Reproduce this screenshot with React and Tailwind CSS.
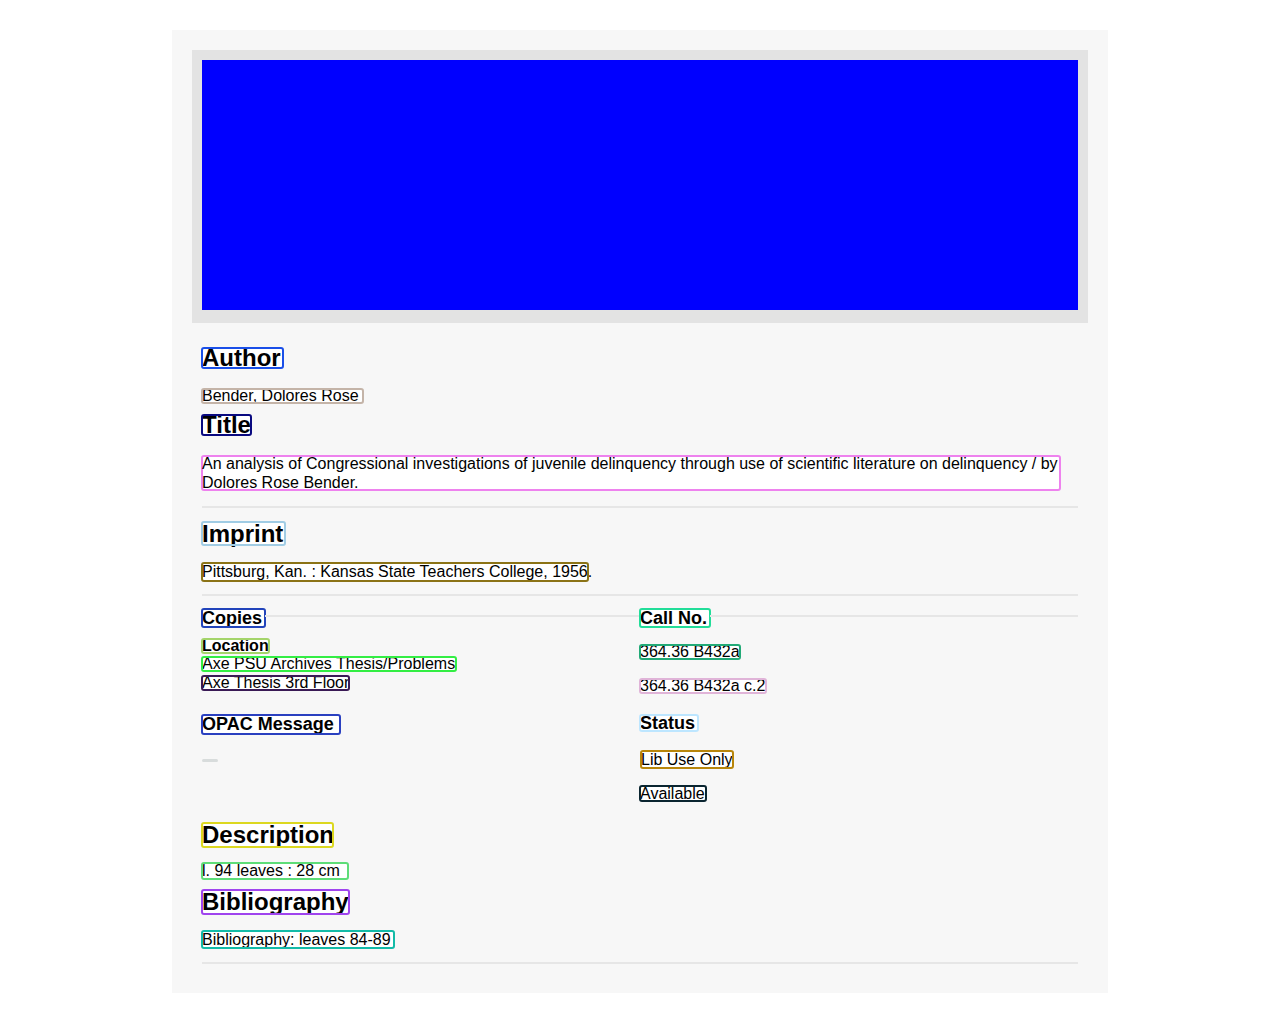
import React from 'react'

// outlined text box, outline sits over the text like in the reference
function Box({ className, children }) {
  return (
    <span className={'block bg-white text-black whitespace-nowrap outline-2 outline-solid -outline-offset-1 rounded-[2px] ' + className}>
      {children}
    </span>
  )
}

function Rule({ className }) {
  return <div className={'h-[2px] bg-[#e6e6e6] ' + className} />
}

export default function App() {
  return (
    <div className="min-h-screen bg-white pt-[30px] font-['Liberation_Sans',Arial,sans-serif] text-[16px] text-black">
      <div className="mx-auto w-[936px] bg-[#f7f7f7] p-[20px] pb-[29px]">

        {/* banner */}
        <div className="bg-[#e3e3e3] p-[10px] pb-[13px]">
          <div className="h-[250px] bg-[#0000ff]" />
        </div>

        <div className="px-[10px]">
          <Box className="mt-[25px] w-[81px] h-[20px] leading-[20px] text-[24px] font-bold outline-[#1a4fe8]">Author</Box>
          <Box className="mt-[21px] w-[161px] h-[14px] leading-[14px] outline-[#c4b4a8]">Bender, Dolores Rose</Box>
          <Box className="mt-[12px] w-[49px] h-[20px] leading-[20px] text-[24px] font-bold outline-[#0a0a80]">Title</Box>
          <Box className="mt-[21px] w-[858px] h-[34px] leading-[19px] !whitespace-normal outline-[#ee82ee]">
            <span className="relative top-[-2px]">
              An analysis of Congressional investigations of juvenile delinquency through use of scientific literature on delinquency / by Dolores Rose Bender.
            </span>
          </Box>

          <Rule className="mt-[16px]" />

          <Box className="mt-[14px] w-[83px] h-[23px] leading-[23px] text-[24px] font-bold outline-[#a0cce4]">Imprint</Box>
          <Box className="mt-[18px] w-[386px] h-[18px] leading-[18px] outline-[#8b7316]">Pittsburg, Kan. : Kansas State Teachers College, 1956.</Box>

          <Rule className="mt-[13px]" />

          {/* copies / call no. */}
          <div className="mt-[13px] grid grid-cols-2">
            <div>
              <div className="flex items-start">
                <Box className="w-[63px] h-[18px] leading-[18px] text-[18px] font-bold outline-[#2244bb]">Copies</Box>
                <div className="mt-[6px] h-[2px] flex-1 bg-[#e6e6e6]" />
              </div>
              <Box className="mt-[12px] w-[67px] h-[14px] leading-[14px] font-bold outline-[#a4d46a]">Location</Box>
              <Box className="mt-[4px] w-[254px] h-[14px] leading-[14px] outline-[#33ee44]">Axe PSU Archives Thesis/Problems</Box>
              <Box className="mt-[5px] w-[147px] h-[14px] leading-[14px] outline-[#3a1a55]">Axe Thesis 3rd Floor</Box>
              <Box className="mt-[25px] w-[138px] h-[19px] leading-[19px] text-[18px] font-bold outline-[#2a40c0]">OPAC Message</Box>
              <div className="mt-[25px] w-[16px] h-[3px] rounded-full bg-[#d8dcdc]" />
            </div>
            <div>
              <div className="flex items-start">
                <Box className="w-[70px] h-[18px] leading-[18px] text-[18px] font-bold outline-[#22dd99]">Call No.</Box>
                <div className="mt-[6px] h-[2px] flex-1 bg-[#e6e6e6]" />
              </div>
              <Box className="mt-[18px] w-[100px] h-[14px] leading-[14px] outline-[#22aa77]">364.36 B432a</Box>
              <Box className="mt-[20px] w-[126px] h-[14px] leading-[14px] outline-[#e0b4d8]">364.36 B432a c.2</Box>
              <Box className="mt-[22px] w-[58px] h-[16px] leading-[16px] text-[18px] font-bold outline-[#bde6ff]">Status</Box>
              <Box className="mt-[20px] ml-[1px] w-[92px] h-[17px] leading-[17px] outline-[#b8860b]">Lib Use Only</Box>
              <Box className="mt-[18px] w-[66px] h-[15px] leading-[15px] outline-[#0a2530]">Available</Box>
            </div>
          </div>

          <Box className="mt-[22px] w-[131px] h-[24px] leading-[24px] text-[24px] font-bold outline-[#dcd820]">Description</Box>
          <Box className="mt-[16px] w-[146px] h-[16px] leading-[16px] outline-[#5edd78]">l. 94 leaves : 28 cm</Box>
          <Box className="mt-[11px] w-[147px] h-[24px] leading-[24px] text-[24px] font-bold outline-[#a044ee]">Bibliography</Box>
          <Box className="mt-[17px] w-[192px] h-[17px] leading-[17px] outline-[#13bba8]">Bibliography: leaves 84-89</Box>

          <Rule className="mt-[14px]" />
        </div>
      </div>
    </div>
  )
}
